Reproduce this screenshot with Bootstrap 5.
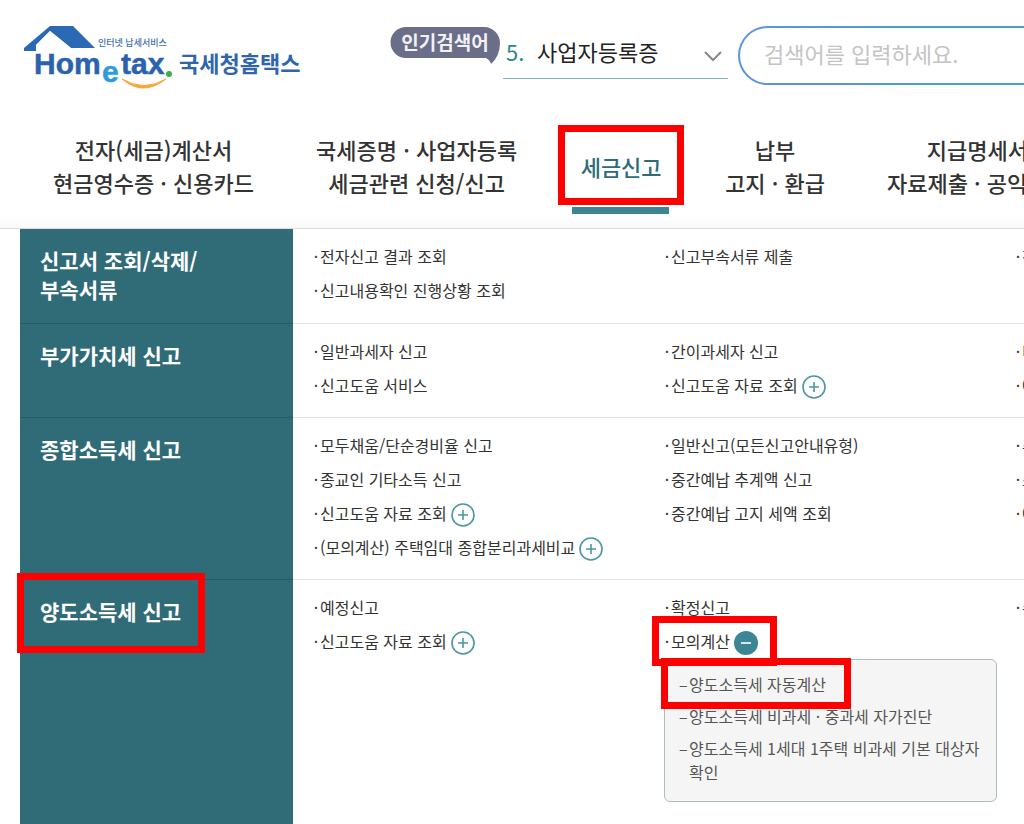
<!DOCTYPE html>
<html lang="ko">
<head>
<meta charset="utf-8">
<meta name="viewport" content="width=device-width, initial-scale=1">
<title>국세청 홈택스</title>
<link href="https://cdn.jsdelivr.net/npm/bootstrap@5.3.0/dist/css/bootstrap.min.css" rel="stylesheet">
<style>
body { font-family: "Noto Sans CJK KR", sans-serif; color: #333; background: #fff; }
a { color: inherit; text-decoration: none; }
.page { overflow: hidden; }
.topbar { height: 116px; padding: 20px 0 0 20px; }
.brand { width: 370px; }
.hot { width: 110px; height: 40px; margin-top: 6px; }
.hot svg { position: absolute; inset: 0; }
.hot span { position: relative; display: block; line-height: 32px; font-size: 19px; font-weight: 700; color: #f1f1f6; text-align: center; }
.keyword { width: 225px; height: 50px; margin: 9px 10px 0 3px; padding-bottom: 5px; border-bottom: 1px solid #7fb8c6; font-size: 22px; line-height: 44px; }
.rank { width: 28px; padding-left: 3px; color: #2d8791; }
.keyword select { appearance: none; border: 0; background: none; color: #222; padding: 0 0 0 6px; min-width: 0; }
.chev { width: 18px; height: 12px; margin: 21px 6px 0 0; }
.search { min-width: 460px; height: 59px; margin-top: 6px; padding: 2px; border-radius: 30px; background: linear-gradient(90deg, #5b93e6, #45a3c4 280px); }
.search input { border: 0; outline: 0; border-radius: 28px; padding: 0 24px 6px; font-size: 22px; background: #fff; }
.search input::placeholder { color: #c4c4c4; opacity: 1; }
.gnb { height: 112px; gap: 62px; padding: 17px 0 0 53px; font-size: 22px; line-height: 33px; font-weight: 500; text-align: center; background: linear-gradient(#fff 88%, #f9f9f9); }
.gnb a { height: 66px; white-space: nowrap; color: #333; }
.gnb .current { color: #2f6c79; width: 84px; }
.gnb .current::after { content: ""; position: absolute; left: -7px; right: -6px; bottom: -15px; height: 7px; background: #3b8594; }
.sitemap { border-top: 1px solid #ddd; padding-left: 20px; }
.side { width: 273px; padding: 17px 20px 19px; background: #306b78; color: #fff; font-size: 21px; line-height: 29px; font-weight: 700; border-bottom: 1px solid #285b67; }
.cols { border-bottom: 1px solid #e2e2e2; padding: 10px 0 15px 19px; }
.last .side, .last .cols { border-bottom: 0; }
.group { width: 351px; font-size: 16px; line-height: 34px; }
.entry::before { content: "·"; width: 8px; text-align: center; }
.entry { display: flex; align-items: center; white-space: nowrap; }
.toggle { width: 24px; height: 24px; margin: 4px 0 0 4px; border: 0; padding: 0; background: none; display: flex; }
.sub { width: 333px; margin: 1px 0 0 1px; border: 1px solid #afbcbe; border-radius: 6px; background: #f5f5f5; padding: 12px 14px 17px; color: #555; line-height: 24px; }
.sub li { display: flex; }
.sub li::before { content: "–"; width: 10px; flex: none; }
.sub li + li { margin-top: 8px; }
.frame { position: absolute; border: 7px solid #f00; z-index: 2; pointer-events: none; }
.f-nav { inset: -8px -21px -6px -21px; }
.f-side { inset: -7px auto auto -3px; width: 188px; height: 80px; }
.f-calc { inset: -8px -19px -8px -11px; }
.f-auto { inset: -14px -25px -13px -28px; }
</style>
</head>
<body>
<div class="page min-vh-100 d-flex flex-column">
  <header class="topbar d-flex align-items-start">
    <a class="brand flex-shrink-0" href="#" aria-label="Hometax 국세청홈택스">
      <svg width="290" height="76" viewBox="20 20 290 76" role="img">
        <path d="M50 26H73L95 48H71L50 31L36 45V51H24V48Z" fill="#2b69b4"/>
        <path d="M50 31L36 45V52H64L71 48Z" fill="#fff"/>
        <g fill="#2b62ad" stroke="#2b62ad" stroke-width=".5" font-family="Liberation Sans, sans-serif" font-weight="700" font-size="30">
          <text x="34" y="74">Hom</text><text x="121" y="74">tax</text>
          <text x="102" y="82" fill="#2f9bdc" stroke="#2f9bdc">e</text>
        </g>
        <circle cx="169" cy="74" r="3" fill="#3fae49"/>
        <path d="M122 79Q143 97 166 79Q144 92 122 79Z" fill="#f4a93c" stroke="#f4a93c"/>
        <text x="98" y="46" font-size="9" font-weight="500" fill="#3d6fae">인터넷 납세서비스</text>
        <text x="179" y="72" font-size="22" font-weight="700" fill="#2f66ab">국세청홈택스</text>
      </svg>
    </a>
    <div class="hot position-relative flex-shrink-0">
      <svg width="110" height="40" viewBox="0 0 110 40" aria-hidden="true"><path d="M16 1H94A16 16 0 0 1 110 17Q110 30 101 38Q100 34 96 32H16A15 15 0 0 1 16 1Z" fill="#6b6e88"/></svg>
      <span>인기검색어</span>
    </div>
    <div class="keyword d-flex flex-shrink-0">
      <label class="rank" for="kw">5.</label>
      <select id="kw" class="flex-grow-1"><option>사업자등록증</option></select>
      <svg class="chev" viewBox="0 0 18 12" fill="none" stroke="#888" stroke-width="2" aria-hidden="true"><path d="M1 2L9 10L17 2"/></svg>
    </div>
    <div class="search flex-grow-1"><input class="w-100 h-100" type="text" placeholder="검색어를 입력하세요." aria-label="검색어"></div>
  </header>

  <nav class="gnb d-flex flex-shrink-0">
    <a href="#">전자(세금)계산서<br>현금영수증 · 신용카드</a>
    <a href="#">국세증명 · 사업자등록<br>세금관련 신청/신고</a>
    <a href="#" class="current position-relative d-flex align-items-center justify-content-center flex-shrink-0">세금신고<span class="frame f-nav"></span></a>
    <a href="#">납부<br>고지 · 환급</a>
    <a href="#">지급명세서<br>자료제출 · 공익법인</a>
  </nav>

  <main class="sitemap d-flex flex-column flex-grow-1">
    <section class="d-flex">
      <div class="side flex-shrink-0">신고서 조회/삭제/<br>부속서류</div>
      <div class="cols d-flex flex-grow-1">
        <ul class="group list-unstyled mb-0 flex-shrink-0">
          <li class="entry"><a href="#">전자신고 결과 조회</a></li>
          <li class="entry"><a href="#">신고내용확인 진행상황 조회</a></li>
        </ul>
        <ul class="group list-unstyled mb-0 flex-shrink-0">
          <li class="entry"><a href="#">신고부속서류 제출</a></li>
        </ul>
        <ul class="group list-unstyled mb-0 flex-shrink-0">
          <li class="entry"><a href="#">전</a></li>
        </ul>
      </div>
    </section>
    <section class="d-flex">
      <div class="side flex-shrink-0">부가가치세 신고</div>
      <div class="cols d-flex flex-grow-1">
        <ul class="group list-unstyled mb-0 flex-shrink-0">
          <li class="entry"><a href="#">일반과세자 신고</a></li>
          <li class="entry"><a href="#">신고도움 서비스</a></li>
        </ul>
        <ul class="group list-unstyled mb-0 flex-shrink-0">
          <li class="entry"><a href="#">간이과세자 신고</a></li>
          <li class="entry"><a href="#">신고도움 자료 조회</a><button class="toggle" type="button" aria-label="펼치기"><svg width="24" height="24" fill="none" stroke="#4a97a3" stroke-width="1.6"><circle cx="12" cy="12" r="11"/><path d="M7 12H17M12 7V17"/></svg></button></li>
        </ul>
        <ul class="group list-unstyled mb-0 flex-shrink-0">
          <li class="entry"><a href="#">비</a></li>
          <li class="entry"><a href="#">예</a></li>
        </ul>
      </div>
    </section>
    <section class="d-flex">
      <div class="side flex-shrink-0">종합소득세 신고</div>
      <div class="cols d-flex flex-grow-1">
        <ul class="group list-unstyled mb-0 flex-shrink-0">
          <li class="entry"><a href="#">모두채움/단순경비율 신고</a></li>
          <li class="entry"><a href="#">종교인 기타소득 신고</a></li>
          <li class="entry"><a href="#">신고도움 자료 조회</a><button class="toggle" type="button" aria-label="펼치기"><svg width="24" height="24" fill="none" stroke="#4a97a3" stroke-width="1.6"><circle cx="12" cy="12" r="11"/><path d="M7 12H17M12 7V17"/></svg></button></li>
          <li class="entry"><a href="#">(모의계산) 주택임대 종합분리과세비교</a><button class="toggle" type="button" aria-label="펼치기"><svg width="24" height="24" fill="none" stroke="#4a97a3" stroke-width="1.6"><circle cx="12" cy="12" r="11"/><path d="M7 12H17M12 7V17"/></svg></button></li>
        </ul>
        <ul class="group list-unstyled mb-0 flex-shrink-0">
          <li class="entry"><a href="#">일반신고(모든신고안내유형)</a></li>
          <li class="entry"><a href="#">중간예납 추계액 신고</a></li>
          <li class="entry"><a href="#">중간예납 고지 세액 조회</a></li>
        </ul>
        <ul class="group list-unstyled mb-0 flex-shrink-0">
          <li class="entry"><a href="#">추</a></li>
          <li class="entry"><a href="#">소</a></li>
          <li class="entry"><a href="#">예</a></li>
        </ul>
      </div>
    </section>
    <section class="last d-flex flex-grow-1">
      <div class="side flex-shrink-0 position-relative">양도소득세 신고<span class="frame f-side"></span></div>
      <div class="cols d-flex flex-grow-1">
        <ul class="group list-unstyled mb-0 flex-shrink-0">
          <li class="entry"><a href="#">예정신고</a></li>
          <li class="entry"><a href="#">신고도움 자료 조회</a><button class="toggle" type="button" aria-label="펼치기"><svg width="24" height="24" fill="none" stroke="#4a97a3" stroke-width="1.6"><circle cx="12" cy="12" r="11"/><path d="M7 12H17M12 7V17"/></svg></button></li>
        </ul>
        <ul class="group list-unstyled mb-0 flex-shrink-0">
          <li class="entry"><a href="#">확정신고</a></li>
          <li class="d-flex"><div class="entry position-relative"><a href="#">모의계산</a><button class="toggle" type="button" aria-label="접기" aria-expanded="true"><svg width="24" height="24"><circle cx="12" cy="12" r="12" fill="#3b8594"/><path d="M7 12H17" stroke="#fff" stroke-width="1.6"/></svg></button><span class="frame f-calc"></span></div></li>
          <li>
            <ul class="sub list-unstyled">
              <li><a href="#" class="position-relative">양도소득세 자동계산<span class="frame f-auto"></span></a></li>
              <li><a href="#">양도소득세 비과세 · 중과세 자가진단</a></li>
              <li><a href="#">양도소득세 1세대 1주택 비과세 기본 대상자 확인</a></li>
            </ul>
          </li>
        </ul>
        <ul class="group list-unstyled mb-0 flex-shrink-0">
          <li class="entry"><a href="#">수</a></li>
        </ul>
      </div>
    </section>
  </main>
</div>
<script src="https://cdn.jsdelivr.net/npm/bootstrap@5.3.0/dist/js/bootstrap.bundle.min.js"></script>
</body>
</html>
